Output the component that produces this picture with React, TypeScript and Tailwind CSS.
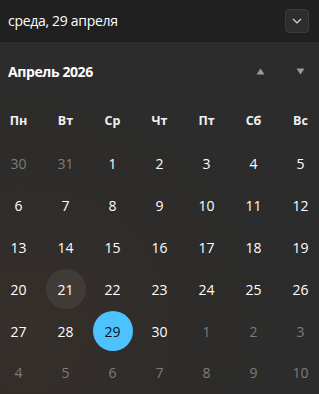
import React from "react";

const weekdays = ["Пн", "Вт", "Ср", "Чт", "Пт", "Сб", "Вс"];

type Day = { n: number; cur: boolean };

const days: Day[] = [
  ...[30, 31].map((n) => ({ n, cur: false })),
  ...Array.from({ length: 30 }, (_, i) => ({ n: i + 1, cur: true })),
  ...Array.from({ length: 10 }, (_, i) => ({ n: i + 1, cur: false })),
];

export default function App() {
  const rows: Day[][] = [];
  for (let i = 0; i < days.length; i += 7) rows.push(days.slice(i, i + 7));
  return (
    <div
      className="w-[319px] h-[394px] overflow-hidden text-white flex flex-col"
      style={{ fontFamily: '"Open Sans", "Noto Sans", sans-serif' }}
    >
      <div className="h-[42px] shrink-0 bg-[#202020] flex items-center justify-between pl-2 pr-[10px] border-b border-[#1c1c1c]">
        <span className="text-[14px] leading-none tracking-[-0.3px]">среда, 29 апреля</span>
        <div className="w-[24px] h-[24px] rounded-[4px] bg-[#2d2d2d] border border-[#3b3b3b] flex items-center justify-center">
          <svg width="10" height="6" viewBox="0 0 10 6">
            <path d="M1 1 L5 5 L9 1" stroke="#d8d8d8" strokeWidth="1.2" fill="none" />
          </svg>
        </div>
      </div>
      <div className="flex-1 bg-[#2c2c2c] bg-[radial-gradient(circle_at_8%_82%,#362f2a_0%,#2f2c2a_35%,#2c2c2c_60%)] flex flex-col">
        <div className="h-[58px] flex items-center justify-between pl-2 pr-[14px]">
          <span className="text-[14px] font-bold tracking-[-0.4px]">Апрель 2026</span>
          <div className="flex items-center gap-[31px]">
            <svg width="9" height="7" viewBox="0 0 9 7">
              <path d="M4.5 0.5 L8.5 6.5 L0.5 6.5 Z" fill="#9b9b9b" />
            </svg>
            <svg width="9" height="7" viewBox="0 0 9 7">
              <path d="M0.5 0.5 L8.5 0.5 L4.5 6.5 Z" fill="#9b9b9b" />
            </svg>
          </div>
        </div>
        <div className="w-[329px] ml-[-5px] grid grid-cols-7 h-[43px] items-center">
          {weekdays.map((w) => (
            <div key={w} className="text-center text-[12.5px] font-bold text-[#f0f0f0]">
              {w}
            </div>
          ))}
        </div>
        <div className="w-[329px] ml-[-5px] flex flex-col">
          {rows.map((r, ri) => (
            <div key={ri} className="grid grid-cols-7 h-[41.8px] items-center">
              {r.map((d, di) => {
                const sel = d.cur && d.n === 29;
                const hov = d.cur && d.n === 21;
                return (
                  <div key={di} className="flex justify-center">
                    <div
                      className={
                        "w-[40px] h-[40px] rounded-full flex items-center justify-center text-[14px] " +
                        (sel
                          ? "bg-[#4cc2ff] text-[#111]"
                          : hov
                          ? "bg-[#413b38] text-white"
                          : d.cur
                          ? "text-white"
                          : "text-[#7c7c7c]")
                      }
                    >
                      {d.n}
                    </div>
                  </div>
                );
              })}
            </div>
          ))}
        </div>
      </div>
    </div>
  );
}
